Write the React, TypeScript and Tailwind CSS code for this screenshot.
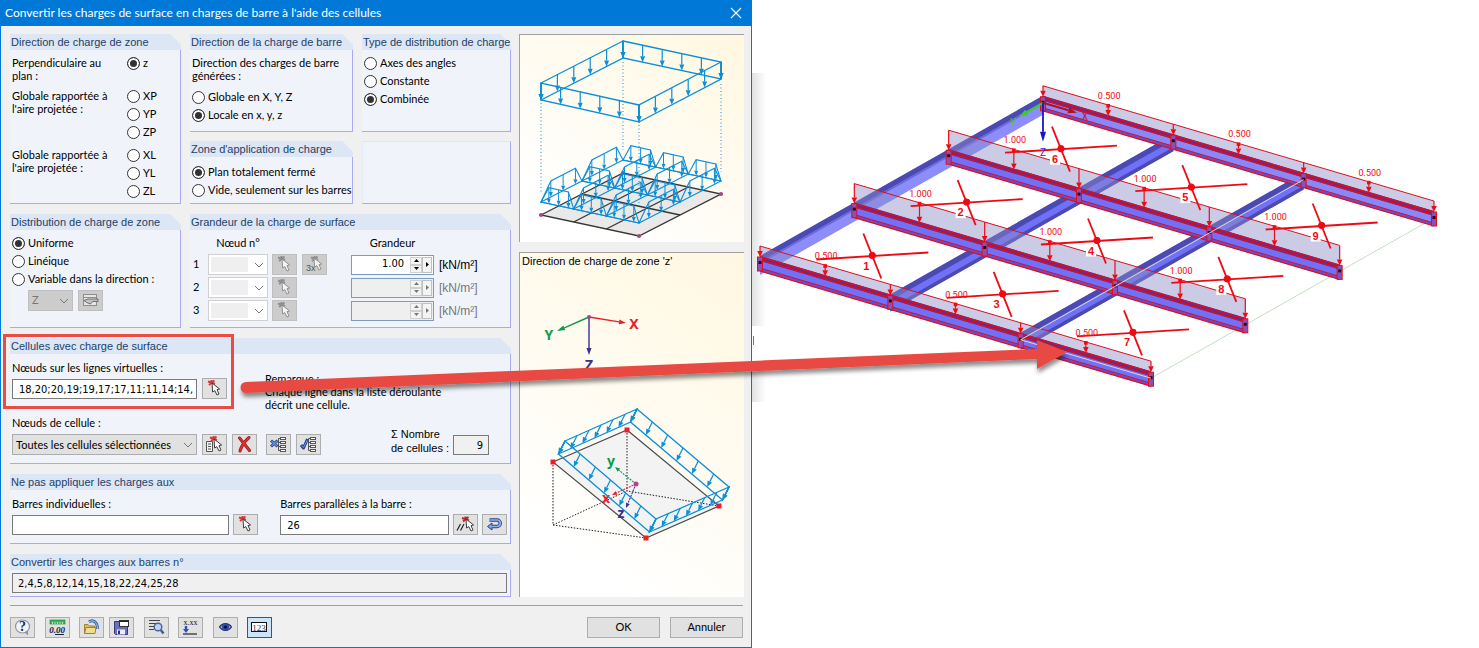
import type { ReactNode } from "react";

type Pt = [number, number];

const lerp = (a: Pt, b: Pt, t: number): Pt => [a[0] + (b[0] - a[0]) * t, a[1] + (b[1] - a[1]) * t];
const pts = (list: Pt[]) => list.map((p) => p.join(",")).join(" ");
const range = (n: number) => Array.from({ length: n }, (_, i) => i);

/* ---------- drawing helpers ---------- */

function Arrow({ from, to, color, head = 6, half = 2.5, width = 1.2, dash }: { from: Pt; to: Pt; color: string; head?: number; half?: number; width?: number; dash?: string }) {
  const dx = to[0] - from[0];
  const dy = to[1] - from[1];
  const len = Math.hypot(dx, dy) || 1;
  const ux = dx / len;
  const uy = dy / len;
  const base: Pt = [to[0] - ux * head, to[1] - uy * head];
  return (
    <g>
      <line x1={from[0]} y1={from[1]} x2={base[0]} y2={base[1]} stroke={color} strokeWidth={width} strokeDasharray={dash} />
      <polygon points={pts([to, [base[0] - uy * half, base[1] + ux * half], [base[0] + uy * half, base[1] - ux * half]])} fill={color} />
    </g>
  );
}

function LoadEdge({ a, b, v, n, color }: { a: Pt; b: Pt; v: Pt; n: number; color: string }) {
  return (
    <g>
      <polygon points={pts([a, b, [b[0] + v[0], b[1] + v[1]], [a[0] + v[0], a[1] + v[1]]])} fill="none" stroke={color} strokeWidth="1.3" />
      {range(n + 1).map((i) => {
        const p = lerp(a, b, i / n);
        return <Arrow key={i} from={p} to={[p[0] + v[0], p[1] + v[1]]} color={color} />;
      })}
    </g>
  );
}

function Trapezoid({ a, b, color }: { a: Pt; b: Pt; color: string }) {
  const up = (t: number): Pt => {
    const p = lerp(a, b, t);
    return [p[0], p[1] - 16];
  };
  return (
    <g>
      <polygon points={pts([a, up(0.24), up(0.84), b])} fill="none" stroke={color} strokeWidth="1.1" />
      {[0.24, 0.54, 0.84].map((t) => (
        <Arrow key={t} from={up(t)} to={lerp(a, b, t)} color={color} head={5} half={2} width={1} />
      ))}
    </g>
  );
}

const BLUE = "#0b8fd6";

function LoadDistributionDrawing() {
  const top: Pt[] = [[541, 83], [623, 41], [721, 62], [639, 105]];
  const base: Pt[] = [[541, 215], [623, 173], [721, 194], [639, 236]];
  const low: Pt[] = [[541, 202], [623, 160], [721, 181], [639, 223]];
  const [L, B, R, F] = low;
  const at = (u: number, v: number): Pt => lerp(lerp(L, F, u), lerp(B, R, u), v);
  return (
    <svg viewBox="520 35 224 207" className="block w-full" aria-label="Distribution des charges">
      <polygon points={pts(base)} fill="#e9e9e9" stroke="#3a3636" strokeWidth="1.4" />
      {[1 / 3, 2 / 3].map((u) => {
        const p = lerp(base[0], base[3], u);
        const q = lerp(base[1], base[2], u);
        return <line key={u} x1={p[0]} y1={p[1]} x2={q[0]} y2={q[1]} stroke="#3a3636" strokeWidth="1.4" />;
      })}
      <line x1="582" y1="194" x2="680" y2="215" stroke="#3a3636" strokeWidth="1.4" />
      {base.map((p) => (
        <circle key={p.join()} cx={p[0]} cy={p[1]} r="2.1" fill="#a8437f" />
      ))}
      <g stroke={BLUE} strokeWidth="1" strokeDasharray="1 2.5">
        <line x1="541" y1="103" x2="541" y2="192" />
        <line x1="623" y1="62" x2="623" y2="150" />
        <line x1="721" y1="84" x2="721" y2="172" />
        <line x1="639" y1="125" x2="639" y2="206" />
      </g>
      {[1, 0.5, 0].map((v) => (
        <g key={v}>
          <line x1={at(0, v)[0]} y1={at(0, v)[1]} x2={at(1, v)[0]} y2={at(1, v)[1]} stroke={BLUE} />
          {range(3).map((i) => (
            <Trapezoid key={i} a={at(i / 3, v)} b={at((i + 1) / 3, v)} color={BLUE} />
          ))}
        </g>
      ))}
      {range(4).map((k) => (
        <g key={k}>
          {range(2).map((i) => (
            <Trapezoid key={i} a={at(k / 3, i / 2)} b={at(k / 3, (i + 1) / 2)} color={BLUE} />
          ))}
        </g>
      ))}
      {[0, 1, 2, 3].map((i) => (
        <LoadEdge key={i} a={top[i]} b={top[(i + 1) % 4]} v={[0, 17]} n={5} color={BLUE} />
      ))}
    </svg>
  );
}

function AxisLabel({ x, y, color, children }: { x: number; y: number; color: string; children: string }) {
  return (
    <text x={x} y={y} fill={color} textAnchor="middle" className="font-['Noto_Sans',sans-serif] text-[14px] font-bold">
      {children}
    </text>
  );
}

function ZoneDirectionDrawing() {
  const plane: Pt[] = [[553, 462], [627, 430], [719, 506], [646, 538]];
  const box: Pt[] = [[565, 441], [637, 409], [729, 487], [656, 519]];
  return (
    <svg viewBox="520 270 224 327" className="block w-full" aria-label="Direction de charge de zone">
      <Arrow from={[589, 317]} to={[557, 331]} color="#0c9a4c" head={8} half={2.5} width={1.4} />
      <Arrow from={[589, 317]} to={[626, 323]} color="#e8202a" head={7} half={2.5} width={1.4} />
      <Arrow from={[589, 317]} to={[589, 355]} color="#3a3089" head={7} half={2.5} width={1.4} />
      <circle cx="589" cy="317" r="2" fill="#a8437f" />
      <AxisLabel x={549} y={340} color="#0c9a4c">Y</AxisLabel>
      <AxisLabel x={634} y={329} color="#e8202a">X</AxisLabel>
      <AxisLabel x={589} y={370} color="#3a3089">Z</AxisLabel>
      <polygon points={pts(plane)} fill="#f3f3f4" stroke="#4a4a4a" strokeWidth="1.2" />
      <g fill="none" stroke="#222" strokeWidth="1" strokeDasharray="1.5 1.5">
        <polyline points="553,462 553,525 646,538" />
        <polyline points="627,430 627,491 719,506" />
        <line x1="553" y1="525" x2="627" y2="491" />
      </g>
      {plane.map((p) => (
        <rect key={p.join()} x={p[0] - 2.5} y={p[1] - 2.5} width="5" height="5" fill="#e8202a" />
      ))}
      <Arrow from={[636, 484]} to={[615, 467]} color="#0c9a4c" head={5} half={2} width={1.1} dash="2 1" />
      <Arrow from={[636, 484]} to={[612, 495]} color="#e8202a" head={5} half={2} width={1.1} dash="2 1" />
      <Arrow from={[636, 484]} to={[626, 508]} color="#3a3089" head={5} half={2} width={1.1} dash="2 1" />
      <circle cx="636" cy="484" r="2.5" fill="#b0458c" />
      <AxisLabel x={611} y={466} color="#0c9a4c">y</AxisLabel>
      <AxisLabel x={606} y={503} color="#e8202a">x</AxisLabel>
      <AxisLabel x={621} y={518} color="#3a3089">z</AxisLabel>
      {[0, 1, 2, 3].map((i) => (
        <LoadEdge key={i} a={box[i]} b={box[(i + 1) % 4]} v={[-6.5, 13]} n={6} color={BLUE} />
      ))}
    </svg>
  );
}

/* ---------- structural model ---------- */

const SEG: Pt = [130.33, 38.4];
const RAF: Pt = [94.33, -53.4];
const node = (i: number, j: number): Pt => [760 + RAF[0] * i + SEG[0] * j, 263 + RAF[1] * i + SEG[1] * j];

function Band({ a, b, top, bottom, fill }: { a: Pt; b: Pt; top: number; bottom: number; fill: string }) {
  return <polygon points={pts([[a[0], a[1] + top], [b[0], b[1] + top], [b[0], b[1] + bottom], [a[0], a[1] + bottom]])} fill={fill} />;
}

function Rafter({ j }: { j: number }) {
  const a = node(0, j);
  const b = node(3, j);
  return (
    <g>
      <Band a={a} b={b} top={-7} bottom={j === 0 ? 12 : 10} fill={j === 0 ? "#8c8cfa" : "#7070f8"} />
      <Band a={a} b={b} top={-7} bottom={-1} fill="#4b4ab2" />
      {j === 0 ? <Band a={a} b={b} top={-1} bottom={1} fill="#6a69dc" /> : <Band a={a} b={b} top={6} bottom={10} fill="#4b4ab2" />}
    </g>
  );
}

function Purlin({ i }: { i: number }) {
  const a = node(i, 0);
  const b = node(i, 3);
  const edge = i === 0 || i === 3;
  const h = edge ? 10 : 19;
  const red = "#dc0f1e";
  const line = (o: number, w = 1) => <line x1={a[0]} y1={a[1] + o} x2={b[0]} y2={b[1] + o} stroke={red} strokeWidth={w} />;
  return (
    <g>
      <Band a={a} b={b} top={-7 - h} bottom={-7} fill="rgba(140,140,200,0.45)" />
      <Band a={a} b={b} top={-7} bottom={8} fill={i === 3 ? "#8888fc" : "#7070fa"} />
      <Band a={a} b={b} top={-7} bottom={-2} fill="#6a2a86" />
      <Band a={a} b={b} top={5} bottom={8} fill="#6a4fc4" />
      {line(-7 - h, 1)}
      {line(-6, 1.4)}
      {line(-3, 1.4)}
      {line(5)}
      {line(8, 1.2)}
      {range(4).map((k) => {
        const p = node(i, k);
        return (
          <g key={k}>
            <rect x={p[0] - 2.5} y={p[1] - 6} width="5" height="14" fill="#8a50b8" stroke={red} strokeWidth="1" />
            <rect x={p[0] - 1.5} y={p[1] - 2} width="3" height="3" fill="#2a0a1c" />
          </g>
        );
      })}
      {range(7).map((k) => {
        const p = node(i, k / 2);
        return (
          <g key={k}>
            <Arrow from={[p[0], p[1] - 7 - h]} to={[p[0], p[1] - 6]} color="#ee0a14" head={6} half={2.8} width={1.2} />
            {k % 2 === 1 && <rect x={p[0] - 1.8} y={p[1] - 8 - h} width="3.6" height="3.6" fill="#ee0a14" />}
          </g>
        );
      })}
    </g>
  );
}

const CELL_NUMBERS = [
  ["1", "3", "7"],
  ["2", "4", "8"],
  ["6", "5", "9"],
];

function StructureModel() {
  const end0 = node(0, 3);
  const end3 = node(3, 3);
  const r0 = node(0, 2);
  const r3 = node(3, 2);
  const o = node(3, 0);
  return (
    <svg viewBox="752 0 727 648" className="block w-full" aria-label="Modèle de structure">
      <defs>
        <linearGradient id="edgeShade" x1="0" x2="1" y1="0" y2="0">
          <stop offset="0" stopColor="#e2e2e2" />
          <stop offset="1" stopColor="#ffffff" />
        </linearGradient>
      </defs>
      <rect x="752" y="73" width="14" height="253" fill="url(#edgeShade)" />
      <rect x="752" y="363" width="14" height="39" fill="url(#edgeShade)" />
      <rect x="753" y="336" width="1" height="9" fill="#c8504c" />
      <line x1={end0[0]} y1={end0[1]} x2={end3[0]} y2={end3[1]} stroke="#c4dfc2" strokeWidth="1" />
      {[0, 1, 2].map((j) => (
        <Rafter key={j} j={j} />
      ))}
      {[3, 2, 1, 0].map((i) => (
        <Purlin key={i} i={i} />
      ))}
      <polyline points={pts([r3, r0, end0])} fill="none" stroke="#dcdcc0" strokeWidth="1" />
      {[2, 1, 0].map((i) =>
        [0, 1, 2].map((j) => {
          const [x, y] = node(i + 0.5, j + 0.5);
          return (
            <g key={`${i}-${j}`} stroke="#ee0a14">
              <line x1={x - 56} y1={y + 4} x2={x + 56} y2={y - 3} strokeWidth="1.8" />
              <line x1={x - 9} y1={y - 22} x2={x + 9} y2={y + 23} strokeWidth="1.8" />
              <circle cx={x} cy={y} r="3.2" fill="#ee0a14" />
              <rect x={x - 11} y={y + 5} width="10" height="11" fill="#ffffff" stroke="none" />
              <text x={x - 6} y={y + 14} fill="#ee0a14" stroke="none" textAnchor="middle" className="font-['Liberation_Sans',Arial,sans-serif] text-[11px] font-bold">
                {CELL_NUMBERS[i][j]}
              </text>
            </g>
          );
        }),
      )}
      {[0, 1, 2, 3].map((i) =>
        [0, 1, 2].map((j) => {
          const [x, y] = node(i, j + 0.5);
          const edge = i === 0 || i === 3;
          return (
            <text key={`${i}-${j}`} x={x + 1} y={y - (edge ? 23 : 32)} fill="#ee0a14" textAnchor="middle" className="font-[Roboto,sans-serif] text-[9px]">
              {edge ? "0.500" : "1.000"}
            </text>
          );
        }),
      )}
      <Arrow from={[o[0], o[1]]} to={[o[0] - 24, o[1] + 14]} color="#35d21c" head={9} half={3} width={2} />
      <Arrow from={[o[0], o[1]]} to={[o[0] + 34, o[1] + 10]} color="#b3101e" head={9} half={3} width={2} />
      <Arrow from={[o[0], o[1]]} to={[o[0], o[1] + 39]} color="#1a14c8" head={10} half={3} width={1.8} />
      <g className="font-[Roboto,sans-serif] text-[10px]" textAnchor="middle">
        <text x={o[0] - 30} y={o[1] + 23} fill="#35d21c">Y</text>
        <text x={o[0] + 42} y={o[1] + 17} fill="#c01828">X</text>
        <text x={o[0]} y={o[1] + 53} fill="#1a28f0">Z</text>
      </g>
    </svg>
  );
}

/* ---------- icons ---------- */

function Icon({ children }: { children: ReactNode }) {
  return (
    <svg viewBox="0 0 23 19" className="block h-[19px] w-[23px]" aria-hidden="true">
      {children}
    </svg>
  );
}

function Cursor({ x = 0, y = 0, off }: { x?: number; y?: number; off?: boolean }) {
  return (
    <path
      transform={`translate(${x} ${y})`}
      d="M0 0L0.6 9L2.8 7.6L5 12L7 11L5 6.6L7.6 6Z"
      fill={off ? "#f4f4f4" : "#ffffff"}
      stroke={off ? "#909090" : "#3c3c3c"}
      strokeWidth="1"
      strokeLinejoin="round"
    />
  );
}

function Spark({ x = 0, y = 0, color = "#d9363a" }: { x?: number; y?: number; color?: string }) {
  return <path transform={`translate(${x} ${y})`} d="M0 1.5L7 4M6.5 0.5L1 5M3.5 0V3.5" stroke={color} strokeWidth="1.9" fill="none" />;
}

const PickIcon = ({ off }: { off?: boolean }) => (
  <Icon>
    <Spark x={5} y={1} color={off ? "#8e8e8e" : "#d9363a"} />
    <Cursor x={9} y={4} off={off} />
  </Icon>
);

const PickThreeIcon = () => (
  <Icon>
    <Spark x={8} y={1} color="#8e8e8e" />
    <text x="3" y="16" fill="#555" className="font-['Liberation_Sans',Arial,sans-serif] text-[9px]">3x</text>
    <Cursor x={11} y={3} off />
  </Icon>
);

const PickListIcon = () => (
  <Icon>
    <path d="M3.5 6.5H9.5V16.5H3.5Z" fill="#f4f4f4" stroke="#555" />
    <path d="M5 9H8M5 11.5H8M5 14H8" stroke="#555" />
    <Spark x={7} y={1} />
    <Cursor x={11} y={4} />
  </Icon>
);

const DeleteIcon = () => (
  <Icon>
    <path d="M6.5 3C9 6 13 11 16.5 15.5M16 2.5C12 6 8.5 11 7 16" stroke="#8b1414" strokeWidth="3" fill="none" strokeLinecap="round" />
    <path d="M6.5 3C9 6 13 11 16.5 15.5M16 2.5C12 6 8.5 11 7 16" stroke="#e03030" strokeWidth="1.8" fill="none" strokeLinecap="round" />
  </Icon>
);

const Tree = () => (
  <g fill="#ffffff" stroke="#555" strokeWidth="1">
    <path d="M11.5 3.5V15.5M11.5 3.5H14M11.5 7.5H14M11.5 11.5H14M11.5 15.5H14" fill="none" />
    <rect x="13.5" y="2.5" width="5" height="2" />
    <rect x="13.5" y="6.5" width="5" height="2" />
    <rect x="13.5" y="10.5" width="5" height="2" />
    <rect x="13.5" y="14.5" width="5" height="2" />
  </g>
);

const TreeClearIcon = () => (
  <Icon>
    <Tree />
    <path d="M4 5.5L10.5 11.5M10.5 5.5L4 11.5" stroke="#27448c" strokeWidth="3" />
    <path d="M4.5 6L10 11M10 6L4.5 11" stroke="#6b93dc" strokeWidth="1.2" />
  </Icon>
);

const TreeCheckIcon = () => (
  <Icon>
    <Tree />
    <path d="M4 10L6.5 13L10.5 4" stroke="#27448c" strokeWidth="3" fill="none" strokeLinejoin="round" />
    <path d="M4.5 10.5L6.5 12.5L10.2 5" stroke="#6b93dc" strokeWidth="1" fill="none" />
  </Icon>
);

const PickParallelIcon = () => (
  <Icon>
    <path d="M3 15.5L6.5 9M6.5 15.5L10 9" stroke="#222" strokeWidth="1.2" />
    <Spark x={8} y={1.5} color="#b8282c" />
    <Cursor x={12} y={4} />
  </Icon>
);

const ReverseIcon = () => (
  <Icon>
    <path d="M6.5 5H14A2.8 2.8 0 0 1 14 11.5H9" fill="none" stroke="#2c4480" strokeWidth="3.4" />
    <path d="M9 8L4.5 11.5L9 15Z" fill="#7aa4ea" stroke="#2c4480" />
    <path d="M6.5 5H14A2.8 2.8 0 0 1 14 11.5H8" fill="none" stroke="#8fb2f0" strokeWidth="1.6" />
  </Icon>
);

const MoveIcon = () => (
  <Icon>
    <rect x="4.5" y="3.5" width="13" height="11" fill="#e6e6e6" stroke="#8d8d8d" />
    <path d="M5 6.5H17" stroke="#8d8d8d" />
    <path d="M5 9.5L9 8H19V10.5H13.5L11.5 13L7.5 11.5Z" fill="#c2c2c2" stroke="#6e6e6e" strokeLinejoin="round" />
  </Icon>
);

const HelpIcon = () => (
  <Icon>
    <ellipse cx="11.5" cy="8.5" rx="7" ry="6.5" fill="#f2f5fa" stroke="#8d939d" strokeWidth="1.2" />
    <path d="M13.5 14.5L17 17.5L17 12Z" fill="#8d939d" />
    <text x="11.5" y="13" textAnchor="middle" fill="#1c2f63" className="font-['Liberation_Serif',serif] text-[14px] font-bold">?</text>
  </Icon>
);

const UnitsIcon = () => (
  <Icon>
    <rect x="4" y="2" width="15" height="4" fill="#3fb45a" stroke="#1d7a34" strokeWidth="0.6" />
    <path d="M6.5 6V4M9 6V4M11.5 6V4M14 6V4M16.5 6V4" stroke="#d8f5de" strokeWidth="0.8" />
    <text x="11" y="14.5" textAnchor="middle" fill="#10204a" className="font-['Liberation_Serif',serif] text-[9px] font-bold italic">0.00</text>
    <path d="M9 16.5H18" stroke="#10204a" />
  </Icon>
);

const OpenIcon = () => (
  <Icon>
    <path d="M9 4C12 1.5 17.5 3 17.5 11" fill="none" stroke="#3c66b0" strokeWidth="3" />
    <path d="M9 4C12 1.5 17.5 3 17.5 11" fill="none" stroke="#a9c4ee" strokeWidth="1" />
    <path d="M4.5 6.5H8L9.5 8H14.5V15.5H4.5Z" fill="#dcc060" stroke="#9a8238" />
    <path d="M4.5 15.5L6 9.5H16L15 15.5Z" fill="#efdc8c" stroke="#9a8238" />
  </Icon>
);

const SaveIcon = () => (
  <Icon>
    <path d="M4.5 3.5H17.5V16.5H5.5L4.5 15.5Z" fill="#6a70c0" stroke="#34387c" />
    <rect x="7" y="11.5" width="8" height="5" fill="#ececf6" />
    <rect x="8" y="12.5" width="2" height="3.5" fill="#2c2f6e" />
    <rect x="9.5" y="2.5" width="9" height="6" fill="#ffffff" stroke="#333" />
    <path d="M10 3.5H18" stroke="#222" />
  </Icon>
);

const SearchIcon = () => (
  <Icon>
    <path d="M4 2.5H15M4 5.5H15M4 8.5H9M4 11.5H9" stroke="#444" />
    <circle cx="13" cy="9" r="3.8" fill="#bcd4f4" stroke="#44639c" strokeWidth="1.4" />
    <path d="M15.8 12L18.5 15.5" stroke="#3b5c94" strokeWidth="2.4" />
  </Icon>
);

const DecimalIcon = () => (
  <Icon>
    <text x="11.5" y="7" textAnchor="middle" fill="#111" className="font-['Liberation_Serif',serif] text-[8px]">x.xx</text>
    <path d="M7 8V12" stroke="#2555b4" strokeWidth="2.4" />
    <path d="M4 11H10L7 15Z" fill="#2555b4" />
    <path d="M4 16H18" stroke="#222" strokeWidth="1.2" />
  </Icon>
);

const EyeIcon = () => (
  <Icon>
    <path d="M5.5 9C8.5 4.5 14.5 4.5 17.5 9C14.5 13.5 8.5 13.5 5.5 9Z" fill="#8fa8e8" stroke="#222a4a" strokeWidth="1.2" />
    <circle cx="11.5" cy="9" r="3.6" fill="#2a48b8" />
    <circle cx="11.5" cy="9" r="1.6" fill="#0a0f2c" />
  </Icon>
);

const NumberIcon = () => (
  <Icon>
    <rect x="3.5" y="4.5" width="15" height="9" fill="#ffffff" stroke="#111" />
    <text x="11" y="12.5" textAnchor="middle" fill="#2a3448" className="font-['Liberation_Serif',serif] text-[9px]">123</text>
  </Icon>
);

/* ---------- controls ---------- */

function IconButton({ label, disabled, active, children }: { label: string; disabled?: boolean; active?: boolean; children: ReactNode }) {
  const tone = active ? "border-[#0a63ad] bg-[#cce4f7]" : disabled ? "border-[#bfbfbf] bg-[#cccccc]" : "border-[#adadad] bg-[#e1e1e1]";
  return (
    <button type="button" aria-label={label} disabled={disabled} className={`h-[21px] w-[25px] shrink-0 border ${tone}`}>
      {children}
    </button>
  );
}

function Group({ title, className = "", children }: { title: string; className?: string; children: ReactNode }) {
  return (
    <section className={`min-w-0 border-r border-b border-[#aaaaf0] bg-[#f0f4fa] ${className}`}>
      <h2 className="-mr-px h-4 overflow-hidden bg-[#f0f0f0] font-['Liberation_Sans',Arial,sans-serif] text-[11px] leading-4 whitespace-nowrap text-[#1d4168]">
        <span className="block h-4 bg-[linear-gradient(225deg,#f0f0f0_7px,#dce6f5_8px)] pl-px">{title}</span>
      </h2>
      {children}
    </section>
  );
}

function Radio({ name, label, checked }: { name: string; label: string; checked?: boolean }) {
  return (
    <label className="flex h-[18px] items-center gap-[3px] whitespace-nowrap">
      <input
        type="radio"
        name={name}
        defaultChecked={checked}
        className="size-[13px] shrink-0 appearance-none rounded-full border border-[#333] bg-white checked:bg-[#333] checked:shadow-[inset_0_0_0_2px_white]"
      />
      {label}
    </label>
  );
}

function Select({ label, value, className, tone }: { label: string; value: string; className: string; tone: string }) {
  return (
    <span className={`relative block h-[21px] ${className}`}>
      <select aria-label={label} defaultValue={value} className={`block h-full w-full appearance-none border pl-[3px] ${tone}`}>
        <option>{value}</option>
      </select>
      <svg viewBox="0 0 10 6" className="pointer-events-none absolute top-2 right-1 h-[6px] w-[10px]" aria-hidden="true">
        <path d="M1 1L5 5L9 1" fill="none" stroke="#777" />
      </svg>
    </span>
  );
}

const NUMERIC = "font-['DejaVu_Sans_Condensed','DejaVu_Sans',Tahoma,sans-serif]";

function ValueSpinner({ label, value, disabled }: { label: string; value: string; disabled?: boolean }) {
  const ink = disabled ? "#777" : "#000";
  return (
    <span className={`flex h-5 w-[83px] border border-[#7a9cbf] p-px ${disabled ? "bg-[#efefef]" : "bg-white"}`}>
      <input aria-label={label} defaultValue={value} disabled={disabled} className={`min-w-0 flex-1 bg-transparent pr-[6px] text-right ${NUMERIC}`} />
      <span className="flex w-3 flex-col">
        <button type="button" aria-label={`${label} plus`} disabled={disabled} className="flex h-2 items-center justify-center border border-[#d0d0d0] bg-[#f4f4f4]">
          <svg viewBox="0 0 5 3" className="h-[3px] w-[5px]"><path d="M0 3L2.5 0L5 3Z" fill={ink} /></svg>
        </button>
        <button type="button" aria-label={`${label} moins`} disabled={disabled} className="flex h-2 items-center justify-center border border-[#d0d0d0] bg-[#f4f4f4]">
          <svg viewBox="0 0 5 3" className="h-[3px] w-[5px]"><path d="M0 0L2.5 3L5 0Z" fill={ink} /></svg>
        </button>
      </span>
      <button type="button" aria-label={`${label} options`} disabled={disabled} className="flex w-[10px] items-center justify-center border border-[#c0c0c0] bg-[#f4f4f4]">
        <svg viewBox="0 0 3 5" className="h-[5px] w-[3px]"><path d="M0 0L3 2.5L0 5Z" fill={ink} /></svg>
      </button>
    </span>
  );
}

const FIELD = `h-5 min-w-0 border border-[#7a7a7a] bg-white pl-[6px] ${NUMERIC}`;
const READONLY = `h-5 border border-[#7a7a7a] bg-[#f0f0f0] px-[5px] ${NUMERIC}`;
const PANEL = "border-t border-l border-[#a0a0a0] bg-[linear-gradient(35deg,#ffffff_15%,#fff7e0)]";
const FOOTER = "h-[21px] w-[73px] border border-[#adadad] bg-[#e1e1e1] text-center";

function DirectionRow({ text, options, checked }: { text: string; options: string[]; checked?: string }) {
  return (
    <div role="radiogroup" aria-label={text} className="flex justify-between">
      <p className="w-[105px] pt-[2px] leading-[13px]">{text}</p>
      <div className="w-[53px]">
        {options.map((o) => (
          <Radio key={o} name="zone-direction" label={o} checked={o === checked} />
        ))}
      </div>
    </div>
  );
}

function Dialog() {
  return (
    <main className="flex min-w-0 flex-col border border-t-0 border-[#0078d7] bg-[#f0f0f0]">
      <header className="flex h-[26px] items-center justify-between bg-[#0078d7] pr-[9px] pl-1 text-white">
        <h1 className="text-[12px] leading-[26px]">Convertir les charges de surface en charges de barre à l'aide des cellules</h1>
        <button type="button" aria-label="Fermer" className="size-3">
          <svg viewBox="0 0 12 12" className="block size-3"><path d="M1 1L11 11M11 1L1 11" stroke="#fff" strokeWidth="1.1" /></svg>
        </button>
      </header>

      <div className="flex gap-2 pt-2 pr-[7px] pl-2">
        <div className="flex min-w-0 flex-1 flex-col gap-[10px] pl-px">
          <div className="grid grid-cols-[171fr_163fr_149fr] gap-x-[9px] gap-y-[9px]">
            <Group title="Direction de charge de zone" className="row-span-2">
              <div className="flex flex-col gap-[5px] pt-1 pb-[3px] pl-[2px]">
                <DirectionRow text="Perpendiculaire au plan :" options={["z"]} checked="z" />
                <DirectionRow text="Globale rapportée à l'aire projetée :" options={["XP", "YP", "ZP"]} />
                <DirectionRow text="Globale rapportée à l'aire projetée :" options={["XL", "YL", "ZL"]} />
              </div>
            </Group>
            <Group title="Direction de la charge de barre">
              <div className="flex flex-col gap-[6px] pt-[6px] pb-[7px] pl-[2px]">
                <p className="leading-[13px]">Direction des charges de barre générées :</p>
                <div>
                  <Radio name="member-direction" label="Globale en X, Y, Z" />
                  <Radio name="member-direction" label="Locale en x, y, z" checked />
                </div>
              </div>
            </Group>
            <Group title="Type de distribution de charge">
              <div className="pt-1 pl-[2px]">
                <Radio name="distribution-type" label="Axes des angles" />
                <Radio name="distribution-type" label="Constante" />
                <Radio name="distribution-type" label="Combinée" checked />
              </div>
            </Group>
            <Group title="Zone d'application de charge">
              <div className="pt-[6px] pb-1 pl-[2px]">
                <Radio name="application-zone" label="Plan totalement fermé" checked />
                <Radio name="application-zone" label="Vide, seulement sur les barres" />
              </div>
            </Group>
            <div className="border border-t-[#dce6f5] border-r-[#aaaaf0] border-b-[#aaaaf0] border-l-[#e4ebf6] bg-[#f0f4fa]" />
          </div>

          <div className="grid grid-cols-[171fr_321fr] gap-x-[9px]">
            <Group title="Distribution de charge de zone">
              <div className="pt-1 pl-[2px]">
                <Radio name="zone-distribution" label="Uniforme" checked />
                <Radio name="zone-distribution" label="Linéique" />
                <Radio name="zone-distribution" label="Variable dans la direction :" />
                <div className="flex gap-[5px] pt-[2px] pl-4">
                  <Select label="Direction" value="Z" className="w-[45px]" tone="border-[#bfbfbf] bg-[#cccccc] text-[#777]" />
                  <IconButton label="Direction de variation" disabled><MoveIcon /></IconButton>
                </div>
              </div>
            </Group>
            <Group title="Grandeur de la charge de surface">
              <div className="grid grid-cols-[15px_60px_83px_83px_auto] items-center justify-start gap-y-[2px] pt-1 pb-[6px] pl-[3px]">
                <span className="col-start-2 text-center leading-[18px]">Nœud n°</span>
                <span className="col-start-4 text-center leading-[18px]">Grandeur</span>
                {[1, 2, 3].map((n) => (
                  <div key={n} className="col-span-5 flex h-[21px] items-center">
                    <span className="w-[15px]">{n}</span>
                    <Select label={`Nœud n° ${n}`} value="" className="w-[60px]" tone="border-[#d0d0d0] bg-white bg-[linear-gradient(#efefef,#efefef)] bg-size-[37px_15px] bg-no-repeat bg-position-[2px_center]" />
                    <span className="flex w-[83px] gap-[5px] pl-1">
                      <IconButton label={`Sélectionner le nœud ${n}`} disabled><PickIcon off /></IconButton>
                      {n === 1 && <IconButton label="Sélectionner trois nœuds" disabled><PickThreeIcon /></IconButton>}
                    </span>
                    <ValueSpinner label={`Grandeur ${n}`} value={n === 1 ? "1.00" : ""} disabled={n !== 1} />
                    <span className={`pl-[5px] font-['Liberation_Sans',Arial,sans-serif] text-[12px] ${n === 1 ? "" : "text-[#777]"}`}>[kN/m²]</span>
                  </div>
                ))}
              </div>
            </Group>
          </div>

          <Group title="Cellules avec charge de surface" className="relative">
            <div className="pointer-events-none absolute -top-1 -left-[7px] h-[75px] w-[231px] border-3 border-[#e84c45]" />
            <div className="flex items-start pt-[7px] pl-[2px]">
              <div className="flex items-end gap-[5px]">
                <label className="flex w-[185px] flex-col gap-1 leading-[14px]">
                  Nœuds sur les lignes virtuelles :
                  <input defaultValue="18,20;20,19;19,17;17,11;11,14;14," className={FIELD} />
                </label>
                <IconButton label="Sélectionner les nœuds"><PickIcon /></IconButton>
              </div>
              <p className="pt-[11px] pl-[38px] leading-[13px]">
                Remarque :<br />
                Chaque ligne dans la liste déroulante
                <br />
                décrit une cellule.
              </p>
            </div>
            <div className="flex items-end pt-[5px] pb-2 pl-[2px]">
              <div className="flex w-[185px] flex-col gap-1 leading-[14px]">
                <span>Nœuds de cellule :</span>
                <Select label="Nœuds de cellule" value="Toutes les cellules sélectionnées" className="w-full" tone="border-[#adadad] bg-[#e1e1e1]" />
              </div>
              <div className="flex gap-[5px] pl-[5px]">
                <IconButton label="Choisir la cellule"><PickListIcon /></IconButton>
                <IconButton label="Supprimer la cellule"><DeleteIcon /></IconButton>
              </div>
              <div className="flex gap-[5px] pl-[9px]">
                <IconButton label="Tout effacer"><TreeClearIcon /></IconButton>
                <IconButton label="Tout valider"><TreeCheckIcon /></IconButton>
              </div>
              <label className="ml-auto flex items-end gap-1 pr-[21px] font-['Liberation_Sans',Arial,sans-serif] leading-[14px]">
                <span>
                  Σ Nombre
                  <br />
                  de cellules :
                </span>
                <input readOnly value="9" className={`w-9 text-right ${READONLY}`} />
              </label>
            </div>
          </Group>

          <Group title="Ne pas appliquer les charges aux">
            <div className="flex items-end gap-1 pt-[7px] pr-[3px] pb-2 pl-[2px]">
              <label className="flex min-w-0 flex-[216] flex-col gap-1 leading-[14px]">
                Barres individuelles :
                <input defaultValue="" className={FIELD} />
              </label>
              <IconButton label="Sélectionner les barres"><PickIcon /></IconButton>
              <label className="ml-[18px] flex min-w-0 flex-[168] flex-col gap-1 leading-[14px]">
                Barres parallèles à la barre :
                <input defaultValue="26" className={FIELD} />
              </label>
              <IconButton label="Sélectionner la barre parallèle"><PickParallelIcon /></IconButton>
              <IconButton label="Rétablir"><ReverseIcon /></IconButton>
            </div>
          </Group>

          <Group title="Convertir les charges aux barres n°">
            <div className="flex pt-[3px] pr-[3px] pb-[3px] pl-[2px]">
              <input aria-label="Convertir les charges aux barres n°" readOnly value="2,4,5,8,12,14,15,18,22,24,25,28" className={`w-full ${READONLY}`} />
            </div>
          </Group>
        </div>

        <aside className="flex w-[225px] shrink-0 flex-col gap-[10px]">
          <div className={PANEL}>
            <LoadDistributionDrawing />
          </div>
          <div className={`flex-1 ${PANEL}`}>
            <p className="pl-[2px] font-['Liberation_Sans',Arial,sans-serif] leading-[17px]">Direction de charge de zone 'z'</p>
            <ZoneDirectionDrawing />
          </div>
        </aside>
      </div>

      <footer className="mt-2 mr-2 ml-[9px] flex items-center border-t border-[#a0a0a0] pt-[11px] pb-[9px]">
        <div className="flex w-[262px] justify-between">
          <IconButton label="Aide"><HelpIcon /></IconButton>
          <IconButton label="Unités"><UnitsIcon /></IconButton>
          <div className="flex gap-[5px]">
            <IconButton label="Ouvrir"><OpenIcon /></IconButton>
            <IconButton label="Enregistrer"><SaveIcon /></IconButton>
          </div>
          <IconButton label="Rechercher"><SearchIcon /></IconButton>
          <IconButton label="Valeurs"><DecimalIcon /></IconButton>
          <IconButton label="Affichage"><EyeIcon /></IconButton>
          <IconButton label="Numérotation" active><NumberIcon /></IconButton>
        </div>
        <div className="ml-auto flex gap-[10px]">
          <button type="button" className={FOOTER}>OK</button>
          <button type="button" className={FOOTER}>Annuler</button>
        </div>
      </footer>
    </main>
  );
}

export default function App() {
  return (
    <div className="relative grid min-h-screen grid-cols-[752fr_727fr] items-start overflow-hidden bg-white font-[Lato,Tahoma,sans-serif] text-[11px] text-black">
      <Dialog />
      <StructureModel />
      <svg viewBox="0 0 1479 648" className="pointer-events-none absolute top-0 left-0 w-full" aria-hidden="true">
        <defs>
          <filter id="arrowShadow" x="-5%" y="-50%" width="110%" height="250%">
            <feDropShadow dx="1" dy="4" stdDeviation="2" floodColor="#000" floodOpacity="0.45" />
          </filter>
        </defs>
        <path d="M246 382L1037 349V340L1067 352L1037 369V359L246 393A5.5 5.5 0 0 1 246 382Z" fill="#e84a42" filter="url(#arrowShadow)" />
      </svg>
    </div>
  );
}
